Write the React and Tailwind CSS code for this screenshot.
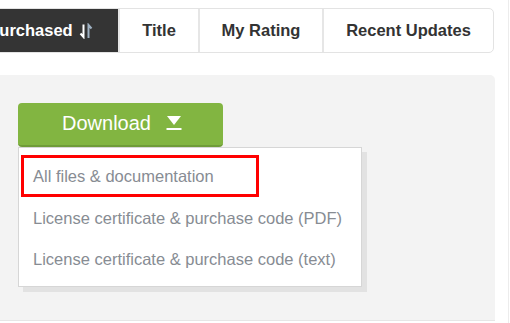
import React from "react";

const tabs = [
    { label: "Title", width: "w-[80px]" },
    { label: "My Rating", width: "w-[124px]" },
    { label: "Recent Updates", width: "w-[171px]" },
];

const menuItems = [
    "License certificate & purchase code (PDF)",
    "License certificate & purchase code (text)",
];

const SortIcon = () => (
    <svg width="14" height="16" viewBox="0 0 14 16" className="ml-[6px]">
        <path d="M4.5 1.5 V14 L1.5 10.5" stroke="#ffffff" strokeWidth="2" fill="none" />
        <path d="M9.5 15 V2 L12.5 5.5" stroke="#9fb1c2" strokeWidth="2" fill="none" />
    </svg>
);

const CaretIcon = () => (
    <svg width="16" height="16" viewBox="0 0 16 16" className="ml-[15px]">
        <path d="M1 1 H15 L8 10 Z" fill="#ffffff" />
        <rect x="0.5" y="13" width="15" height="2" fill="#ffffff" />
    </svg>
);

const App = () => {
    // sort tabs on top, download dropdown below in the grey panel
    return (
        <div
            className="relative h-[323px] w-[510px] overflow-hidden bg-white"
            style={{ fontFamily: '"Liberation Sans", Arial, sans-serif' }}
        >
            <div className="absolute right-[1px] top-0 h-full w-[1px] bg-[#ececec]"></div>

            <div className="ml-[-40px] mt-[8px] flex h-[45px] w-[534px] overflow-hidden rounded-r-[5px] border border-[#e3e3e3] text-[16.5px] font-bold text-[#333333]">
                <div className="flex w-[157px] items-center justify-center bg-[#343434] pl-[2px] text-white">
                    Purchased
                    <SortIcon />
                </div>
                {tabs.map((tab) => (
                    <div
                        key={tab.label}
                        className={`flex ${tab.width} items-center justify-center border-l-2 border-[#e6e6e6]`}
                    >
                        {tab.label}
                    </div>
                ))}
            </div>

            <div className="mt-[22px] h-[246px] w-[495px] rounded-tr-[5px] border-b border-[#e6e6e6] bg-[#f3f3f3] pl-[18px] pt-[28px]">
                <button className="flex h-[44px] w-[205px] items-center justify-center rounded-[4px] border-b-2 border-[#6f9c38] bg-[#82b541] pb-[2px] pl-[3px] text-[20px] text-white">
                    Download
                    <CaretIcon />
                </button>

                <div className="w-[344px] border border-[#d6d6d6] bg-white pb-[7px] pt-[7px] text-[16.5px] text-[#878c93] shadow-[5px_5px_0_#e2e2e2]">
                    <div className="ml-[2px] flex h-[42px] w-[238px] items-center border-[3px] border-[#ff0000] pl-[9px] pt-[1px]">
                        All files &amp; documentation
                    </div>
                    {menuItems.map((item) => (
                        <div key={item} className="flex h-[41px] items-center pl-[14px] pt-[1px]">
                            {item}
                        </div>
                    ))}
                </div>
            </div>
        </div>
    );
};

export default App;
